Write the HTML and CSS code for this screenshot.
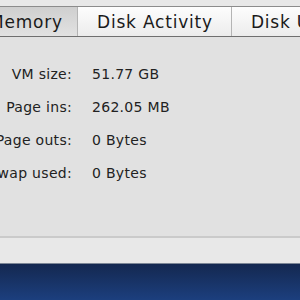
FILE: index.html
```html
<!DOCTYPE html>
<html>
  <head>
    <meta charset="utf-8" />
    <title>Activity Monitor</title>
    <link rel="stylesheet" href="styles.css">
  </head>
  <body>
    <div class="window">
      <div class="tabs">
        <div class="tab selected">Memory</div>
        <div class="tab">Disk Activity</div>
        <div class="tab">Disk Usage</div>
      </div>
      <div class="panel">
        <div class="stats">
          <span class="label">VM size:</span><span class="value">51.77 GB</span>
          <span class="label">Page ins:</span><span class="value">262.05 MB</span>
          <span class="label">Page outs:</span><span class="value">0 Bytes</span>
          <span class="label">Swap used:</span><span class="value">0 Bytes</span>
        </div>
      </div>
      <div class="footer"></div>
    </div>
    <div class="desktop"></div>
  </body>
</html>
```

FILE: styles.css
```css
* {
  box-sizing: border-box;
}
html, body {
  margin: 0;
  padding: 0;
  height: 100%;
  overflow: hidden;
}
body {
  font-family: "DejaVu Sans", sans-serif;
  background: #e8e8e8;
  color: #1a1a1a;
  display: flex;
  flex-direction: column;
}
.window {
  padding-top: 6px;
  background: #e8e8e8;
}
.tabs {
  display: flex;
  height: 31px;
  margin-left: -22px;
  border-top: 1px solid #8c8c8c;
  border-bottom: 1px solid #6f6f6f;
  background: linear-gradient(#fdfdfd, #ececec);
  box-shadow: 0 1px 0 #c8c8c8;
  white-space: nowrap;
}
.tab {
  display: flex;
  align-items: center;
  padding: 0 18px 0 19px;
  font-size: 17px;
  letter-spacing: 0.8px;
  border-right: 1px solid #b4b4b4;
}
.tab.selected {
  width: 100px;
  padding-left: 11px;
  background: linear-gradient(#cfcfcf, #e2e2e2);
}
.panel {
  height: 201px;
  background: #e1e1e1;
  border-bottom: 2px solid #cacaca;
  padding-top: 28px;
}
.stats {
  display: grid;
  grid-template-columns: 72px auto;
  column-gap: 20px;
  row-gap: 15px;
  font-size: 14px;
  letter-spacing: 0.3px;
  line-height: 18px;
  color: #222;
}
.label {
  display: flex;
  justify-content: flex-end;
  white-space: nowrap;
  overflow: hidden;
}
.footer {
  height: 26px;
  background: #e8e8e8;
  border-bottom: 1px solid #7c8696;
}
.desktop {
  flex: 1;
  background: linear-gradient(#142850, #1c3f7e);
}
```
